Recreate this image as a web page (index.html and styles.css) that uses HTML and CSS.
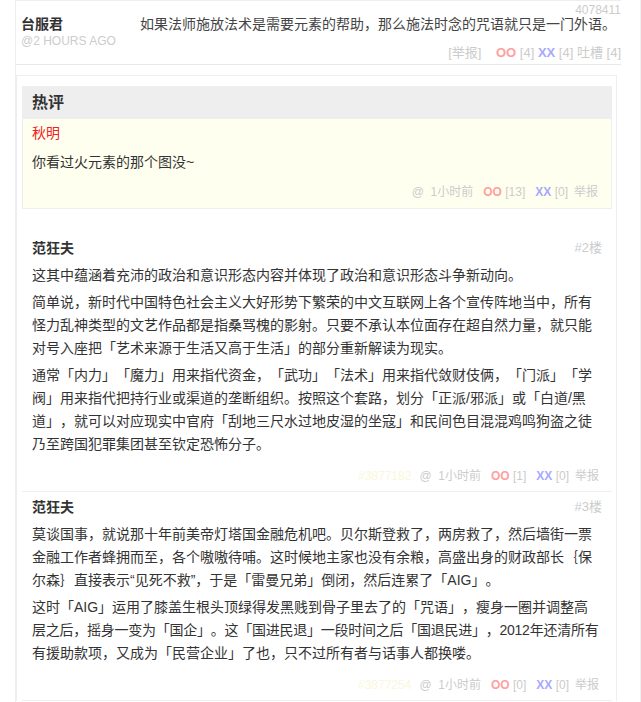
FILE: index.html
```html
<!DOCTYPE html>
<html lang="zh-CN">

<head>
    <meta charset="UTF-8">
    <meta name="viewport" content="width=device-width, initial-scale=1.0">
    <title>评论</title>
    <link rel="stylesheet" href="styles.css">
</head>

<body>
    <div class="page">
        <!-- 原帖 -->
        <div class="top">
            <span class="top-id">4078411</span>
            <div class="top-row">
                <div class="top-author">
                    <strong>台服君</strong>
                    <small>@2 hours ago</small>
                </div>
                <p class="top-text">如果法师施放法术是需要元素的帮助，那么施法时念的咒语就只是一门外语。</p>
            </div>
            <div class="top-foot">
                <span class="top-report">[举报]</span>
                <b class="oo">OO</b> [4] <b class="xx">XX</b> [4] 吐槽 [4]
            </div>
        </div>

        <div class="list">
            <!-- 热评 -->
            <div class="hot">
                <h3>热评</h3>
                <div class="hot-body">
                    <div class="hot-author">秋明</div>
                    <p class="hot-text">你看过火元素的那个图没~</p>
                    <div class="foot">
                        <span class="when">@&nbsp; 1小时前</span>
                        <span class="vote"><b class="oo">OO</b> [13]</span>
                        <span class="vote"><b class="xx">XX</b> [0]</span>
                        <span class="report">举报</span>
                    </div>
                </div>
            </div>

            <div class="comment">
                <div class="comment-head">
                    <strong>范狂夫</strong>
                    <span class="floor">#2楼</span>
                </div>
                <div class="comment-text">
                    <p>这其中蕴涵着充沛的政治和意识形态内容并体现了政治和意识形态斗争新动向。</p>
                    <p>简单说，新时代中国特色社会主义大好形势下繁荣的中文互联网上各个宣传阵地当中，所有怪力乱神类型的文艺作品都是指桑骂槐的影射。只要不承认本位面存在超自然力量，就只能对号入座把「艺术来源于生活又高于生活」的部分重新解读为现实。</p>
                    <p>通常「内力」「魔力」用来指代资金，「武功」「法术」用来指代敛财伎俩，「门派」「学阀」用来指代把持行业或渠道的垄断组织。按照这个套路，划分「正派/邪派」或「白道/黑道」，就可以对应现实中官府「刮地三尺水过地皮湿的坐寇」和民间色目混混鸡鸣狗盗之徒乃至跨国犯罪集团甚至钦定恐怖分子。</p>
                </div>
                <div class="foot">
                    <span class="cid">#3877182</span>
                    <span class="when">@&nbsp; 1小时前</span>
                    <span class="vote"><b class="oo">OO</b> [1]</span>
                    <span class="vote"><b class="xx">XX</b> [0]</span>
                    <span class="report">举报</span>
                </div>
            </div>

            <div class="comment">
                <div class="comment-head">
                    <strong>范狂夫</strong>
                    <span class="floor">#3楼</span>
                </div>
                <div class="comment-text">
                    <p>莫谈国事，就说那十年前美帝灯塔国金融危机吧。贝尔斯登救了，两房救了，然后墙街一票金融工作者蜂拥而至，各个嗷嗷待哺。这时候地主家也没有余粮，高盛出身的财政部长｛保尔森｝直接表示“见死不救”，于是「雷曼兄弟」倒闭，然后连累了「AIG」。</p>
                    <p>这时「AIG」运用了膝盖生根头顶绿得发黑贱到骨子里去了的「咒语」，瘦身一圈并调整高<span class="tight">层之后，摇身一变为「国企」。这「国进民退」一段时间之后「国退民进」，2012年还清所有</span>有援助款项，又成为「民营企业」了也，只不过所有者与话事人都换喽。</p>
                </div>
                <div class="foot">
                    <span class="cid">#3877254</span>
                    <span class="when">@&nbsp; 1小时前</span>
                    <span class="vote"><b class="oo">OO</b> [0]</span>
                    <span class="vote"><b class="xx">XX</b> [0]</span>
                    <span class="report">举报</span>
                </div>
            </div>
        </div>
    </div>
</body>

</html>
```

FILE: styles.css
```css
* {
    margin: 0;
    padding: 0;
    box-sizing: border-box;
}

body {
    font-family: "Liberation Sans", "Noto Sans CJK SC", sans-serif;
    font-size: 14px;
    color: #333;
    background-color: #fff;
    text-spacing-trim: space-all;
    text-autospace: no-autospace;
}

.page {
    margin-left: 15px;
    width: 626px;
    min-height: 702px;
    border-left: 1px solid #eee;
    border-right: 1px solid #f0f0f0;
}

/* 原帖 */
.top {
    position: relative;
    width: 605px;
    height: 65px;
    padding: 13px 0 0 5px;
    border-top: 1px solid #eee;
    border-bottom: 1px solid #e8e8e8;
}

.top-id {
    position: absolute;
    top: 1px;
    right: 0;
    font-size: 12px;
    line-height: 16px;
    color: #ccc;
}

.top-row {
    display: flex;
}

.top-author {
    display: flex;
    flex-direction: column;
    width: 119px;
}

.top-author strong {
    font-size: 14px;
    line-height: 20px;
}

.top-author small {
    font-size: 12px;
    line-height: 14px;
    color: #ccc;
    text-transform: uppercase;
}

.top-text {
    line-height: 20px;
    color: #444;
}

.top-foot {
    margin-top: -3px;
    text-align: right;
    font-size: 13px;
    line-height: 16px;
    color: #ccc;
}

.top-report {
    margin-right: 11px;
}

.oo {
    color: #ffa0a0;
}

.xx {
    color: #a8a8ff;
}

/* 列表 */
.list {
    width: 601px;
    margin-top: 10px;
    padding: 10px 4px 0 5px;
    border: 1px solid #eee;
    border-bottom: none;
}

.hot {
    border: 1px solid #eee;
    margin-bottom: 24px;
}

.hot h3 {
    height: 32px;
    padding-left: 9px;
    font-size: 16px;
    line-height: 32px;
    background-color: #eee;
}

.hot-body {
    padding: 4px 13px 6px 9px;
    background-color: #ffffef;
}

.hot-author {
    line-height: 20px;
    color: #e22;
}

.hot-text {
    margin-top: 9px;
    line-height: 20px;
}

.hot-body .foot {
    margin-top: 10px;
}

.foot {
    display: flex;
    justify-content: flex-end;
    align-items: center;
    font-size: 12px;
    line-height: 20px;
    color: #ccc;
}

.foot .vote {
    margin-left: 10px;
}

.foot .report {
    margin-left: 6px;
}

.cid {
    margin-right: 8px;
    color: #f9f7dc;
}

/* 评论 */
.comment {
    padding: 5px 13px 5px 10px;
    border-bottom: 1px solid #eee;
}

.comment-head {
    display: flex;
    justify-content: space-between;
    align-items: center;
    line-height: 20px;
}

.floor {
    margin-right: -3px;
    font-size: 13px;
    color: #ccc;
}

.comment-text {
    margin-top: 6px;
}

.comment-text p {
    line-height: 23px;
    margin-bottom: 4px;
}

.comment-text p:last-child {
    margin-bottom: 0;
}

.comment-text .tight {
    letter-spacing: -0.25px;
}

.comment .foot {
    margin-top: 10px;
}
```
